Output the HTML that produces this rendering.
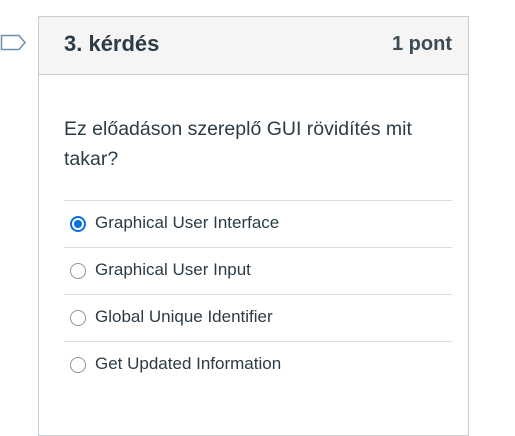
<!DOCTYPE html>
<html><head><meta charset="utf-8"><style>
*{margin:0;padding:0;box-sizing:border-box}
body{width:515px;height:414px;background:#fff;font-family:"Liberation Sans",sans-serif;color:#2d3b45;position:relative;overflow:hidden}
.box{position:absolute;left:38px;top:16px;width:431px;height:420px;border:1px solid #c7cdd1}
.hdr{height:58px;background:#f5f5f5;border-bottom:1px solid #c7cdd1;position:relative}
.t{position:absolute;left:25px;top:14px;font-size:22px;font-weight:bold}
.p{position:absolute;right:16px;top:16px;font-size:20px;font-weight:bold;color:#3d4b55}
.q{position:absolute;left:25px;top:97px;font-size:19.5px;line-height:30px;width:370px}
.opt{position:absolute;left:25px;width:388px;height:47px;border-top:1px solid #dcdfe2;font-size:17px}
.opt span{position:absolute;left:31px;top:12px}
.r{position:absolute;left:6px;top:15px;width:16px;height:16px;border-radius:50%;border:1.5px solid #8b969e}
.r.on{border:2px solid #0770e3}
.r.on:after{content:"";position:absolute;left:2px;top:2px;width:8px;height:8px;border-radius:50%;background:#0770e3}
</style></head><body>
<svg style="position:absolute;left:0;top:32px" width="27" height="22"><path d="M1.5 3.5H19L25 10.5L19 17.5H1.5Z" fill="none" stroke="#6f8fae" stroke-width="1.5"/></svg>
<div class="box">
<div class="hdr"><div class="t">3. kérdés</div><div class="p">1 pont</div></div>
<div class="q">Ez előadáson szereplő GUI rövidítés mit takar?</div>
<div class="opt" style="top:183px"><div class="r on"></div><span>Graphical User Interface</span></div>
<div class="opt" style="top:230px"><div class="r"></div><span>Graphical User Input</span></div>
<div class="opt" style="top:277px"><div class="r"></div><span>Global Unique Identifier</span></div>
<div class="opt" style="top:324px"><div class="r"></div><span>Get Updated Information</span></div>
</div>
</body></html>
